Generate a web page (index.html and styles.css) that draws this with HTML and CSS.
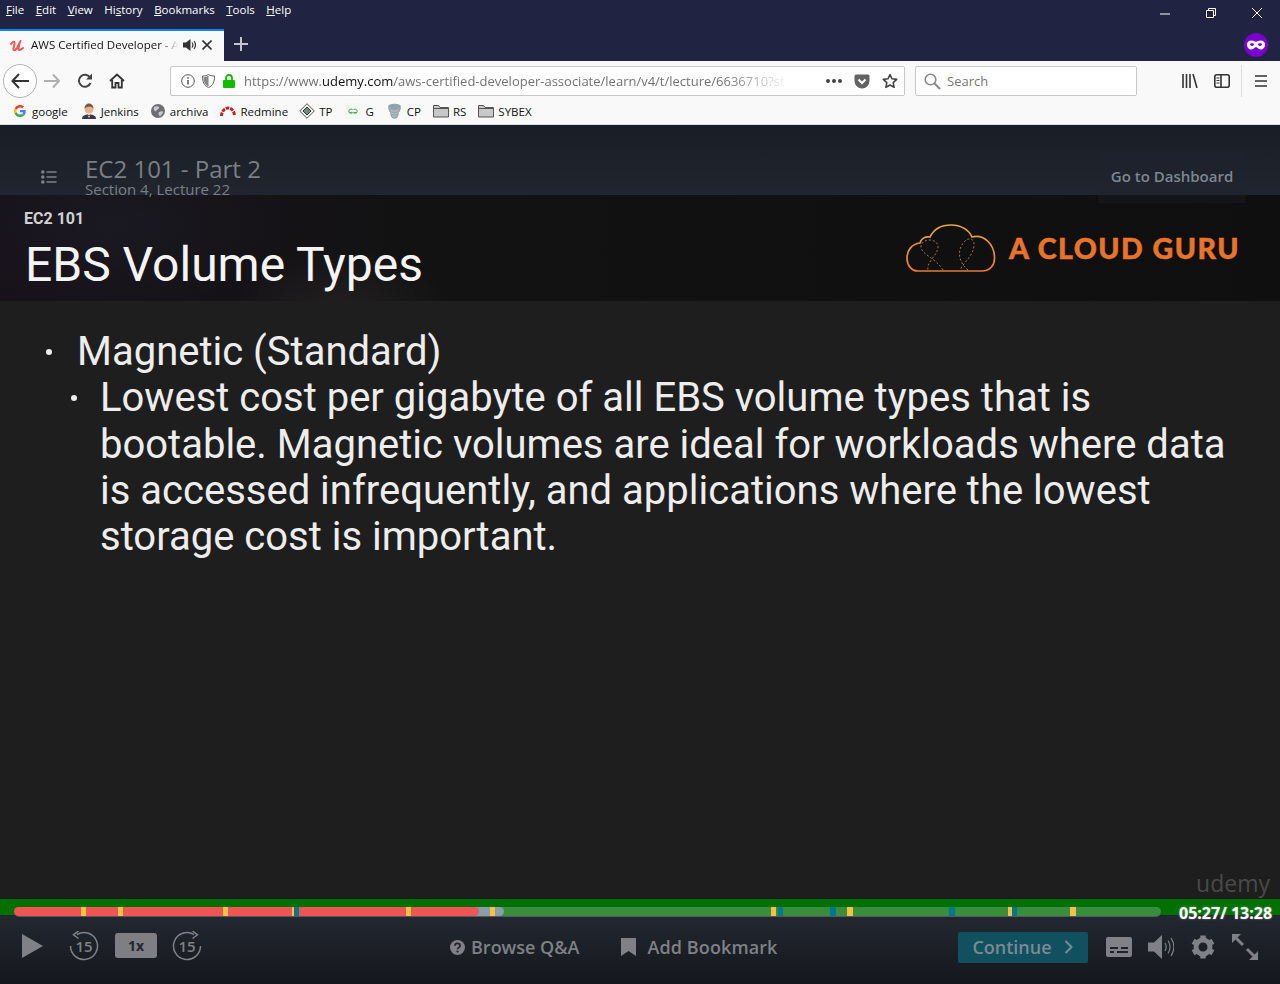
FILE: index.html
```html
<!DOCTYPE html>
<html lang="en">
    <head>
        <meta charset="UTF-8" />
        <meta name="viewport" content="width=device-width, initial-scale=1.0" />
        <title>AWS Certified Developer - Associate</title>
        <link rel="stylesheet" href="styles.css">
    </head>
    <body>
        <div class="browser">
            <div class="menubar">
                <nav class="menu">
                    <span><u>F</u>ile</span>
                    <span><u>E</u>dit</span>
                    <span><u>V</u>iew</span>
                    <span>Hi<u>s</u>tory</span>
                    <span><u>B</u>ookmarks</span>
                    <span><u>T</u>ools</span>
                    <span><u>H</u>elp</span>
                </nav>
                <div class="window-btns">
                    <svg width="12" height="12" viewBox="0 0 12 12"><path d="M1 7h10" stroke="#fff" fill="none"/></svg>
                    <svg width="12" height="12" viewBox="0 0 12 12"><path d="M1.5 3.5h7v7h-7zM3.5 3.5v-2h7v7h-2" stroke="#fff" fill="none"/></svg>
                    <svg width="12" height="12" viewBox="0 0 12 12"><path d="M1 1l10 10M11 1L1 11" stroke="#fff" fill="none"/></svg>
                </div>
            </div>
            <div class="tabbar">
                <div class="tab">
                    <svg class="tab-icon" width="16" height="16" viewBox="0 0 16 16"><path d="M2 7C4 4 6 4 5.500 7L4.500 11C4 14 6 14 8 11L11.500 4M10.500 7L9.500 11C9 14 11 13.500 14 11" fill="none" stroke="#ea5a5a" stroke-width="2" stroke-linecap="round"/></svg>
                    <span class="tab-title">AWS Certified Developer - A</span>
                    <svg class="tab-sound" width="14" height="14" viewBox="0 0 14 14"><path d="M0 4.500h3L7.500 1v12L3 9.500H0z" fill="#333"/><path d="M9 4.500c1 1.400 1 3.600 0 5M11 3c1.800 2.400 1.800 5.600 0 8" fill="none" stroke="#333" stroke-width="1.200"/></svg>
                    <svg class="tab-close" width="10" height="10" viewBox="0 0 10 10"><path d="M.5.500l9 9M9.500.500l-9 9" stroke="#333" stroke-width="1.600" fill="none"/></svg>
                </div>
                <svg class="new-tab" width="14" height="14" viewBox="0 0 14 14"><path d="M7 0v14M0 7h14" stroke="#c3c5ce" stroke-width="2" fill="none"/></svg>
                <div class="private-badge">
                    <svg width="18" height="10" viewBox="0 0 18 10"><path d="M4.500.500c2 0 3 1.200 4.500 1.200S11.500.500 13.500.500C16 .500 18 2 18 4.500 18 7.500 16 9.500 13.500 9.500 11 9.500 10.500 7 9 7S7 9.500 4.500 9.500C2 9.500 0 7.500 0 4.500 0 2 2 .500 4.500.500zM5 3.300c-1 0-2 .500-2 1.300s1 1.300 2 1.300 2-.500 2-1.300-1-1.300-2-1.300zM13 3.300c-1 0-2 .500-2 1.300s1 1.300 2 1.300 2-.500 2-1.300-1-1.300-2-1.300z" fill="#fff" fill-rule="evenodd"/></svg>
                </div>
            </div>
            <div class="navbar">
                <div class="back-btn">
                    <svg width="18" height="16" viewBox="0 0 18 16"><path d="M8 1L1.500 8 8 15M2 8h16" stroke="#333" stroke-width="2" fill="none"/></svg>
                </div>
                <svg class="nav-icon forward" width="16" height="16" viewBox="0 0 16 16"><path d="M9 1.500L15 8l-6 6.500M14.500 8H0" stroke="#b0b0b0" stroke-width="2" fill="none"/></svg>
                <svg class="nav-icon reload" width="16" height="16" viewBox="0 0 16 16"><path d="M13.500 10a6 6 0 1 1-.5-5.500" stroke="#444" stroke-width="2" fill="none"/><path d="M15 .500v6H9z" fill="#444"/></svg>
                <svg class="nav-icon home" width="16" height="16" viewBox="0 0 16 16"><path d="M1 8l7-6.500L15 8M3.200 7v7.500h3.300V10h3v4.500h3.300V7" stroke="#333" stroke-width="1.800" fill="none"/></svg>
                <div class="urlbar">
                    <svg class="url-info" width="14" height="14" viewBox="0 0 14 14"><circle cx="7" cy="7" r="6.300" stroke="#555" fill="none"/><path d="M7 6v4.500M7 3.200v1.600" stroke="#555" stroke-width="1.500"/></svg>
                    <svg class="url-shield" width="13" height="14" viewBox="0 0 13 14"><path d="M6.500.500C8 1.500 10 2 12.500 2 12.500 8 11 11.500 6.500 13.500 2 11.500.5 8 .5 2 3 2 5 1.500 6.500.500z" stroke="#666" fill="none"/><path d="M6.500 1.500V12.500C3 11 1.500 8 1.500 3 3.500 3 5 2.500 6.500 1.500z" fill="#888"/></svg>
                    <svg class="url-lock" width="12" height="14" viewBox="0 0 12 14"><path d="M3 6V4a3 3 0 0 1 6 0v2" stroke="#12bc00" stroke-width="1.800" fill="none"/><rect y="6" width="12" height="8" rx="1" fill="#12bc00"/></svg>
                    <div class="url-text">https://www.<b>udemy.com</b>/aws-certified-developer-associate/learn/v4/t/lecture/6636710?st</div>
                    <div class="url-dots"><i></i><i></i><i></i></div>
                    <svg class="url-pocket" width="16" height="15" viewBox="0 0 16 15"><path d="M2 .500h12A1.500 1.500 0 0 1 15.500 2v5a7.500 7.500 0 0 1-15 0V2A1.500 1.500 0 0 1 2 .500z" fill="#636363"/><path d="M4.500 5.500L8 9l3.500-3.500" stroke="#fff" stroke-width="2" fill="none"/></svg>
                    <svg class="url-star" width="16" height="16" viewBox="0 0 16 16"><path d="M8 1.500l2 4.300 4.700.6-3.500 3.200.9 4.700L8 12l-4.100 2.300.9-4.700L1.300 6.400 6 5.800z" stroke="#444" stroke-width="1.600" stroke-linejoin="round" fill="none"/></svg>
                </div>
                <div class="searchbar">
                    <svg width="17" height="17" viewBox="0 0 17 17"><circle cx="6.500" cy="6.500" r="5.300" stroke="#888" stroke-width="1.600" fill="none"/><path d="M10.500 10.500l5.500 5.500" stroke="#888" stroke-width="2"/></svg>
                    <span>Search</span>
                </div>
                <svg class="nav-icon library" width="16" height="14" viewBox="0 0 16 14"><path d="M1 0v14M4.500 0v14M8 0v14M11 0l4 14" stroke="#333" stroke-width="1.600" fill="none"/></svg>
                <svg class="nav-icon sidebar" width="16" height="14" viewBox="0 0 16 14"><rect x=".8" y=".8" width="14.400" height="12.400" rx="2" stroke="#333" stroke-width="1.600" fill="none"/><path d="M7 1v12" stroke="#333" stroke-width="1.600"/><path d="M2.500 4h3M2.500 6.500h3M2.500 9h3" stroke="#333"/></svg>
                <div class="nav-divider"></div>
                <svg class="nav-icon burger" width="12" height="12" viewBox="0 0 12 12"><path d="M0 1h12M0 6h12M0 11h12" stroke="#333" stroke-width="1.600"/></svg>
            </div>
            <div class="bookmarks">
                <span class="bm bm-google">
                    <svg width="12" height="12" viewBox="0 0 48 48"><path fill="#ea4335" d="M24 9.500c3.500 0 6.700 1.300 9.100 3.400l6.800-6.800C35.800 2.400 30.200 0 24 0 14.600 0 6.500 5.400 2.600 13.200l7.900 6.100C12.400 13.600 17.700 9.500 24 9.500z"/><path fill="#4285f4" d="M47 24.500c0-1.600-.2-3.100-.4-4.500H24v9h12.900c-.6 3-2.200 5.400-4.700 7.100l7.700 6C44.400 38 47 31.800 47 24.500z"/><path fill="#fbbc05" d="M10.500 28.700c-.5-1.500-.8-3-.8-4.700s.3-3.200.8-4.700l-7.900-6.100C.9 16.500 0 20.100 0 24s.9 7.500 2.600 10.800z"/><path fill="#34a853" d="M24 48c6.500 0 11.900-2.100 15.900-5.900l-7.700-6c-2.100 1.400-4.900 2.300-8.200 2.300-6.300 0-11.600-4.200-13.500-9.800l-7.900 6.100C6.500 42.600 14.600 48 24 48z"/></svg>
                    google
                </span>
                <span class="bm bm-jenkins">
                    <svg width="14" height="16" viewBox="0 0 14 16"><path d="M0 16c0-3 2-4.500 7-4.500s7 1.500 7 4.500z" fill="#3a3a46"/><path d="M5.500 11.500h3L7 15z" fill="#fff"/><circle cx="7" cy="6" r="4.500" fill="#e3b38f"/><path d="M2.500 5.500C2.500 2 5 .500 7 .500s4.500 1.500 4.500 5C10 3.500 5 3 2.500 5.500z" fill="#7b5a44"/><path d="M5.500 11.500L7 13l1.500-1.500" stroke="#c33" fill="none"/></svg>
                    Jenkins
                </span>
                <span class="bm bm-archiva">
                    <svg width="14" height="14" viewBox="0 0 14 14"><circle cx="7" cy="7" r="7" fill="#6f6f73"/><path d="M3 3c2-1 4-1 5 0S6 6 5 7 2 6 3 3zM8 8c2-1 4-1 4 0s-2 4-3 4-2-3-1-4z" fill="#c9c9cc"/></svg>
                    archiva
                </span>
                <span class="bm bm-redmine">
                    <svg width="16" height="12" viewBox="0 0 16 12"><path d="M1.500 11a6.500 8 0 0 1 13 0" stroke="#c2232c" stroke-width="3" stroke-dasharray="3.500 1" fill="none"/></svg>
                    Redmine
                </span>
                <span class="bm bm-tp">
                    <svg width="16" height="16" viewBox="0 0 16 16"><path d="M8 .700L15.300 8 8 15.300.7 8z" fill="#eee" stroke="#555"/><path d="M8 4l4 4-4 4-4-4z" fill="#6b8f78" stroke="#333"/></svg>
                    TP
                </span>
                <span class="bm bm-gfg">
                    <svg width="16" height="16" viewBox="0 0 16 16"><rect width="16" height="16" fill="#f2f7f2"/><path d="M7.500 6.500a2.300 2 0 1 0 0 3.200H3.800M8.500 6.500a2.300 2 0 1 1 0 3.200h3.700" stroke="#4a9a5a" fill="none"/></svg>
                    G
                </span>
                <span class="bm bm-cp">
                    <svg width="15" height="16" viewBox="0 0 15 16"><ellipse cx="7.500" cy="3.500" rx="6.500" ry="2.800" fill="#8ea3b2"/><path d="M1.500 5c1 2 11 2 12 0l-1.500 4c-1 1.500-8 1.500-9 0zM3.500 10.500c1 1 7 1 8 0l-1.500 4c-1 1-4 1-5 0z" fill="#a9b3ba" stroke="#6d7c87" stroke-width=".6"/></svg>
                    CP
                </span>
                <span class="bm bm-rs">
                    <svg width="16" height="14" viewBox="0 0 16 14"><path d="M.5 13V1.500h5l1.500 2h8.500V13z" fill="#c8c8c8" stroke="#555"/><path d="M.5 4.500h15" stroke="#555"/></svg>
                    RS
                </span>
                <span class="bm bm-sybex">
                    <svg width="16" height="14" viewBox="0 0 16 14"><path d="M.5 13V1.500h5l1.500 2h8.500V13z" fill="#c8c8c8" stroke="#555"/><path d="M.5 4.500h15" stroke="#555"/></svg>
                    SYBEX
                </span>
            </div>
        </div>

        <div class="player">
            <header class="topbar">
                <svg class="outline-icon" width="16" height="14" viewBox="0 0 16 14"><path d="M5.500 2h10M5.500 7h10M5.500 12h10" stroke="#7d8186" stroke-width="1.600"/><circle cx="1.800" cy="2" r="1.800" fill="#7d8186"/><circle cx="1.800" cy="7" r="1.800" fill="#7d8186"/><circle cx="1.800" cy="12" r="1.800" fill="#7d8186"/></svg>
                <div class="lecture-info">
                    <div class="lecture-title">EC2 101 - Part 2</div>
                    <div class="lecture-section">Section 4, Lecture 22</div>
                </div>
                <a class="dashboard-btn">Go to Dashboard</a>
            </header>

            <section class="slide">
                <div class="slide-head">
                    <div>
                        <div class="slide-kicker">EC2 101</div>
                        <h1 class="slide-title">EBS Volume Types</h1>
                    </div>
                    <div class="acg-logo">
                        <svg width="90" height="48" viewBox="0 0 90 48">
                            <defs>
                                <linearGradient id="acg" x1="0" y1="0" x2="0" y2="1">
                                    <stop offset="0" stop-color="#e9a93a"/>
                                    <stop offset="1" stop-color="#e57a2c"/>
                                </linearGradient>
                            </defs>
                            <path d="M12 47C5 47 1 41 1 34 1 26 6 20 14 19 15 15 19 12 24 13 28 5 35 1 45 1 55 1 63 6 66 13 78 10 88 20 88.500 33 89 41 84 47 76 47z" fill="none" stroke="url(#acg)" stroke-width="1.700"/>
                            <path d="M37 46C30 34 14 30 15 22 16 14 31 14 32 22 33 30 20 38 22 46M62 46C52 38 51 26 58 18 62 13 69 14 68 22 67 32 58 38 54 46" fill="none" stroke="#a07a40" stroke-width="1" stroke-dasharray="2 2"/>
                        </svg>
                        <span>A CLOUD GURU</span>
                    </div>
                </div>
                <div class="slide-body">
                    <ul class="points">
                        <li>
                            Magnetic (Standard)
                            <ul class="subpoints">
                                <li>Lowest cost per gigabyte of all EBS volume types that is bootable. Magnetic volumes are ideal for workloads where data is accessed infrequently, and applications where the lowest storage cost is important.</li>
                            </ul>
                        </li>
                    </ul>
                    <div class="watermark">udemy</div>
                </div>
            </section>

            <div class="timeline">
                <div class="track">
                    <div class="seg seg-played" style="width: 465px"></div>
                    <div class="seg seg-buffered" style="width: 30px"></div>
                    <div class="seg seg-rest"></div>
                    <i class="mark yellow" style="left: 67px"></i>
                    <i class="mark yellow" style="left: 104px"></i>
                    <i class="mark yellow" style="left: 209px"></i>
                    <i class="mark yellow" style="left: 278px; width: 2px"></i>
                    <i class="mark teal" style="left: 280px"></i>
                    <i class="mark yellow" style="left: 392px"></i>
                    <i class="mark yellow" style="left: 476px"></i>
                    <i class="mark yellow" style="left: 757px"></i>
                    <i class="mark teal" style="left: 764px"></i>
                    <i class="mark teal" style="left: 816px; width: 6px"></i>
                    <i class="mark yellow" style="left: 833px; width: 6px"></i>
                    <i class="mark teal" style="left: 935px; width: 6px"></i>
                    <i class="mark yellow" style="left: 994px; width: 4px"></i>
                    <i class="mark teal" style="left: 998px"></i>
                    <i class="mark yellow" style="left: 1056px; width: 6px"></i>
                </div>
                <div class="time">05:27/ 13:28</div>
            </div>

            <footer class="controls">
                <svg class="play" width="21" height="24" viewBox="0 0 21 24"><path d="M0 0l21 12L0 24z" fill="#7f8186"/></svg>
                <div class="skip skip-back">
                    <svg width="30" height="30" viewBox="0 0 30 30"><path d="M8 3.500A13.500 13.500 0 1 1 1.500 15" fill="none" stroke="#7f8186" stroke-width="1.500"/><path d="M9.500 0L4.500 3.800 9.500 7.500" fill="none" stroke="#7f8186" stroke-width="1.500"/></svg>
                    <span>15</span>
                </div>
                <div class="speed">1x</div>
                <div class="skip skip-fwd">
                    <svg width="30" height="30" viewBox="0 0 30 30"><path d="M22 3.500A13.500 13.500 0 1 0 28.500 15" fill="none" stroke="#7f8186" stroke-width="1.500"/><path d="M20.500 0L25.500 3.800 20.500 7.500" fill="none" stroke="#7f8186" stroke-width="1.500"/></svg>
                    <span>15</span>
                </div>
                <a class="ctl-link qa-link">
                    <svg width="15" height="15" viewBox="0 0 15 15"><circle cx="7.500" cy="7.500" r="7.500" fill="#7f8186"/><path d="M5 5.700c0-3 5-3 5 0 0 2-2.500 1.800-2.500 3.600" stroke="#1f222b" stroke-width="1.700" fill="none"/><circle cx="7.500" cy="11.500" r="1.100" fill="#1f222b"/></svg>
                    Browse Q&amp;A
                </a>
                <a class="ctl-link bookmark-link">
                    <svg width="15" height="18" viewBox="0 0 15 18"><path d="M0 0h15v18l-7.500-5L0 18z" fill="#7f8186"/></svg>
                    Add Bookmark
                </a>
                <a class="continue-btn">
                    Continue
                    <svg width="9" height="14" viewBox="0 0 9 14"><path d="M1.500 1l6 6-6 6" fill="none" stroke="#7b8a92" stroke-width="2"/></svg>
                </a>
                <svg class="ctl-icon cc" width="26" height="20" viewBox="0 0 26 20"><rect width="26" height="20" rx="2" fill="#7f8186"/><path d="M4 11h8M15 11h7M4 15h4M11 15h11" stroke="#1f222b" stroke-width="1.800"/></svg>
                <svg class="ctl-icon volume" width="26" height="24" viewBox="0 0 26 24"><path d="M0 7.500h6L14 0v24l-8-7.500H0z" fill="#7f8186"/><path d="M17 8c1.500 2.500 1.500 5.500 0 8M20 5.500c2.500 4 2.500 9 0 13M23 3c3.500 5.500 3.500 12.500 0 18" fill="none" stroke="#7f8186" stroke-width="1.200"/></svg>
                <svg class="ctl-icon gear" width="24" height="24" viewBox="0 0 24 24">
                    <circle cx="12" cy="12" r="7" fill="none" stroke="#7f8186" stroke-width="5"/>
                    <path d="M12 .500v23" stroke="#7f8186" stroke-width="5.500" stroke-dasharray="4.500 14 4.500"/>
                    <path d="M12 .500v23" stroke="#7f8186" stroke-width="5.500" stroke-dasharray="4.500 14 4.500" transform="rotate(60 12 12)"/>
                    <path d="M12 .500v23" stroke="#7f8186" stroke-width="5.500" stroke-dasharray="4.500 14 4.500" transform="rotate(120 12 12)"/>
                </svg>
                <svg class="ctl-icon expand" width="26" height="26" viewBox="0 0 26 26"><path d="M0 0h9L0 9zM26 26h-9l9-9z" fill="#7f8186"/><path d="M3 3l8 8M23 23l-8-8" stroke="#7f8186" stroke-width="3"/></svg>
            </footer>
        </div>
    </body>
</html>
```

FILE: styles.css
```css
* {
    box-sizing: border-box;
}
html,
body {
    margin: 0;
    padding: 0;
    height: 984px;
    overflow: hidden;
}
body {
    font-family: "Open Sans", "Noto Sans", sans-serif;
    background-color: #1e1e1e;
    display: flex;
    flex-direction: column;
}
svg {
    display: block;
    flex-shrink: 0;
}

/* browser chrome */
.browser {
    height: 125px;
    color: #111;
    font-size: 11.500px;
}
.menubar {
    height: 29px;
    background-color: #202442;
    display: flex;
    justify-content: space-between;
    color: #fff;
}
.menu {
    display: flex;
    padding: 2px 0 0 6px;
    gap: 11.500px;
    line-height: 15px;
}
.window-btns {
    display: flex;
    gap: 34px;
    padding: 7px 17px 0 0;
}
.tabbar {
    height: 32px;
    background-color: #202442;
    display: flex;
    align-items: center;
}
.tab {
    width: 224px;
    height: 32px;
    background-color: #f9f9f9;
    border-top: 2px solid #0a84ff;
    padding-bottom: 2px;
    display: flex;
    align-items: center;
}
.tab-icon {
    margin-left: 9px;
}
.tab-title {
    width: 147px;
    margin: 0 0 1px 6px;
    white-space: nowrap;
    -webkit-mask-image: linear-gradient(to right, #000 88%, transparent);
    mask-image: linear-gradient(to right, #000 88%, transparent);
}
.tab-sound {
    margin-left: 5px;
}
.tab-close {
    margin-left: 5px;
}
.new-tab {
    margin-left: 10px;
    margin-bottom: 2px;
}
.private-badge {
    width: 24px;
    height: 24px;
    border-radius: 50%;
    background-color: #7b00cf;
    margin-left: auto;
    margin-right: 12px;
    display: flex;
    align-items: center;
    justify-content: center;
}
.navbar {
    height: 39px;
    background-color: #f9f9f9;
    display: flex;
    align-items: center;
}
.back-btn {
    width: 34px;
    height: 34px;
    margin-left: 3px;
    border: 1px solid #b4b4b4;
    border-radius: 50%;
    background-color: #fff;
    display: flex;
    align-items: center;
    justify-content: center;
}
.forward {
    margin-left: 7px;
}
.reload {
    margin-left: 17px;
}
.home {
    margin-left: 16px;
}
.urlbar {
    width: 735px;
    height: 30px;
    margin: 1px 0 0 45px;
    background-color: #fff;
    border: 1px solid #c8c8c8;
    border-radius: 2px;
    display: flex;
    align-items: center;
}
.url-info {
    margin-left: 10px;
}
.url-shield {
    margin-left: 7px;
}
.url-lock {
    margin-left: 8px;
}
.url-text {
    width: 546px;
    margin-left: 9px;
    font-size: 13px;
    color: #737373;
    white-space: nowrap;
    -webkit-mask-image: linear-gradient(to right, #000 88%, transparent);
    mask-image: linear-gradient(to right, #000 88%, transparent);
}
.url-text b {
    font-weight: 400;
    color: #111;
}
.url-dots {
    display: flex;
    gap: 2px;
    margin-left: auto;
}
.url-dots i {
    width: 4px;
    height: 4px;
    border-radius: 50%;
    background-color: #444;
}
.url-pocket {
    margin-left: 12px;
}
.url-star {
    margin-left: 12px;
    margin-right: 6px;
}
.searchbar {
    width: 222px;
    height: 30px;
    margin: 1px 0 0 10px;
    background-color: #fff;
    border: 1px solid #c8c8c8;
    border-radius: 2px;
    display: flex;
    align-items: center;
    gap: 6px;
    padding-left: 8px;
    font-size: 13px;
    color: #777;
}
.library {
    margin-left: 45px;
}
.sidebar {
    margin-left: 16px;
}
.nav-divider {
    width: 1px;
    height: 32px;
    background-color: #ddd;
    margin-left: 11px;
}
.burger {
    margin-left: 13px;
}
.bookmarks {
    height: 25px;
    background-color: #f9f9f9;
    border-bottom: 1px solid #dcdcdc;
    padding: 0 0 2px 14px;
    display: flex;
    align-items: center;
}
.bm {
    display: flex;
    align-items: center;
    gap: 5px;
    white-space: nowrap;
    margin-left: 12px;
}
.bm-google {
    gap: 6px;
    margin-left: 0;
}
.bm-jenkins {
    margin-left: 14px;
}
.bm-redmine,
.bm-tp,
.bm-gfg,
.bm-rs,
.bm-sybex {
    gap: 4px;
}
.bm-tp {
    margin-left: 11px;
}
.bm-gfg,
.bm-cp {
    margin-left: 13px;
}

/* course player */
.player {
    height: 859px;
    display: flex;
    flex-direction: column;
}
.topbar {
    height: 70px;
    flex-shrink: 0;
    background: linear-gradient(#191d25, #21252f);
    display: flex;
    position: relative;
    z-index: 1;
}
.outline-icon {
    margin: 45px 0 0 41px;
}
.lecture-info {
    margin: 30px 0 0 28px;
    color: #7b7f84;
}
.lecture-title {
    font-size: 24px;
    line-height: 27px;
}
.lecture-section {
    font-size: 15px;
    line-height: 14px;
}
.dashboard-btn {
    width: 148px;
    height: 55px;
    margin: 23px 34px 0 auto;
    background-color: rgba(34, 38, 49, 0.3);
    color: #7c8792;
    font-size: 15px;
    font-weight: 600;
    display: flex;
    align-items: center;
    justify-content: center;
}
.slide {
    flex: 1;
    min-height: 0;
    display: flex;
    flex-direction: column;
    font-family: Roboto, "Open Sans", sans-serif;
    background-color: #1e1e1e;
}
.slide-head {
    height: 106px;
    flex-shrink: 0;
    background-color: #111111;
    background-image: radial-gradient(ellipse 180px 90px at 120px 30px, rgba(40, 45, 60, 0.25), transparent),
        radial-gradient(ellipse 110px 70px at 340px 120px, rgba(70, 66, 60, 0.3), transparent),
        linear-gradient(to right, #17121a, #121212 35%, #0f0f0f);
    display: flex;
    justify-content: space-between;
    padding: 14px 40px 0 24px;
}
.slide-kicker {
    font-size: 16px;
    font-weight: 700;
    color: #d2d2d2;
    line-height: 19px;
}
.slide-title {
    margin: 9px 0 0 1px;
    font-size: 48px;
    font-weight: 400;
    line-height: 56px;
    color: #f4f4f4;
}
.acg-logo {
    display: flex;
    align-items: center;
    gap: 13px;
    height: 78px;
    color: #e8742a;
    font-family: Lato, sans-serif;
    font-weight: 900;
    font-size: 28.500px;
    letter-spacing: 1.500px;
    -webkit-text-stroke: 0.5px #e8742a;
}
.slide-body {
    flex: 1;
    min-height: 0;
    display: flex;
    flex-direction: column;
    justify-content: space-between;
    padding-top: 28px;
    color: #ededed;
}
.points,
.subpoints {
    list-style: none;
    margin: 0;
    padding: 0;
}
.points {
    font-size: 40px;
    line-height: 46.300px;
    padding: 0 40px 0 77px;
}
.points > li {
    position: relative;
}
.subpoints {
    padding-left: 23px;
}
.subpoints > li {
    position: relative;
}
.points > li::before,
.subpoints > li::before {
    content: "";
    position: absolute;
    width: 6px;
    height: 6px;
    border-radius: 50%;
    background-color: #ededed;
    top: 20px;
}
.points > li::before {
    left: -31px;
}
.subpoints > li::before {
    left: -29px;
}
.watermark {
    align-self: flex-end;
    margin: 0 10px 1px 0;
    font-family: "Open Sans", sans-serif;
    font-size: 23px;
    line-height: 29px;
    color: #4a4a4a;
}
.timeline {
    height: 18px;
    flex-shrink: 0;
    background: linear-gradient(#007000 16px, #22262f 16px);
    display: flex;
    align-items: flex-end;
    padding-left: 14px;
    position: relative;
    z-index: 1;
}
.track {
    width: 1147px;
    height: 10px;
    display: flex;
    position: relative;
    border-bottom: 1px solid #555861;
    border-radius: 0 0 5px 5px;
}
.seg {
    height: 9px;
}
.seg-played {
    background-color: #f05555;
    border-radius: 5px;
    position: relative;
    z-index: 2;
}
.seg-buffered {
    background-color: #8a9ca8;
    margin-left: -5px;
    border-radius: 0 5px 5px 0;
    position: relative;
    z-index: 1;
}
.seg-rest {
    flex: 1;
    background-color: #388e3c;
    margin-left: -5px;
    border-radius: 0 5px 5px 0;
}
.mark {
    position: absolute;
    top: 0;
    width: 5px;
    height: 9px;
    z-index: 3;
}
.yellow {
    background-color: #f8c145;
}
.teal {
    background-color: #007791;
}
.time {
    margin: 0 0 -6px 18px;
    font-size: 16px;
    font-weight: 700;
    line-height: 20px;
    color: #fff;
    white-space: nowrap;
    text-shadow: 0 0 2px rgba(255, 255, 255, 0.5);
}
.controls {
    height: 67px;
    flex-shrink: 0;
    background: linear-gradient(#23272f, #14171d);
    display: flex;
    align-items: center;
    color: #7f8186;
    padding-bottom: 7px;
}
.play {
    margin: 0 0 3px 22px;
}
.skip {
    width: 30px;
    height: 30px;
    margin-bottom: 3px;
    position: relative;
    display: flex;
    align-items: center;
    justify-content: center;
}
.skip svg {
    position: absolute;
    left: 0;
    top: 0;
}
.skip span {
    font-size: 15px;
    font-weight: 600;
}
.skip-back {
    margin-left: 26px;
}
.speed {
    width: 42px;
    height: 25px;
    margin: 0 0 3px 16px;
    border-radius: 3px;
    background-color: #7d7f85;
    color: #23272f;
    font-size: 14px;
    font-weight: 700;
    display: flex;
    align-items: center;
    justify-content: center;
}
.skip-fwd {
    margin-left: 15px;
}
.ctl-link {
    display: flex;
    align-items: center;
    font-size: 18px;
    font-weight: 600;
    white-space: nowrap;
}
.qa-link {
    margin-left: 248px;
    gap: 6px;
}
.bookmark-link {
    margin-left: 42px;
    gap: 11px;
    letter-spacing: 0.1px;
}
.continue-btn {
    width: 130px;
    height: 31px;
    margin-left: 180px;
    border-radius: 2px;
    background-color: #10505f;
    color: #7b8a92;
    font-size: 18px;
    font-weight: 600;
    display: flex;
    align-items: center;
    justify-content: center;
    gap: 12px;
}
.cc {
    margin-left: 18px;
}
.volume {
    margin-left: 16px;
}
.gear {
    margin-left: 17px;
}
.expand {
    margin-left: 17px;
}
```
